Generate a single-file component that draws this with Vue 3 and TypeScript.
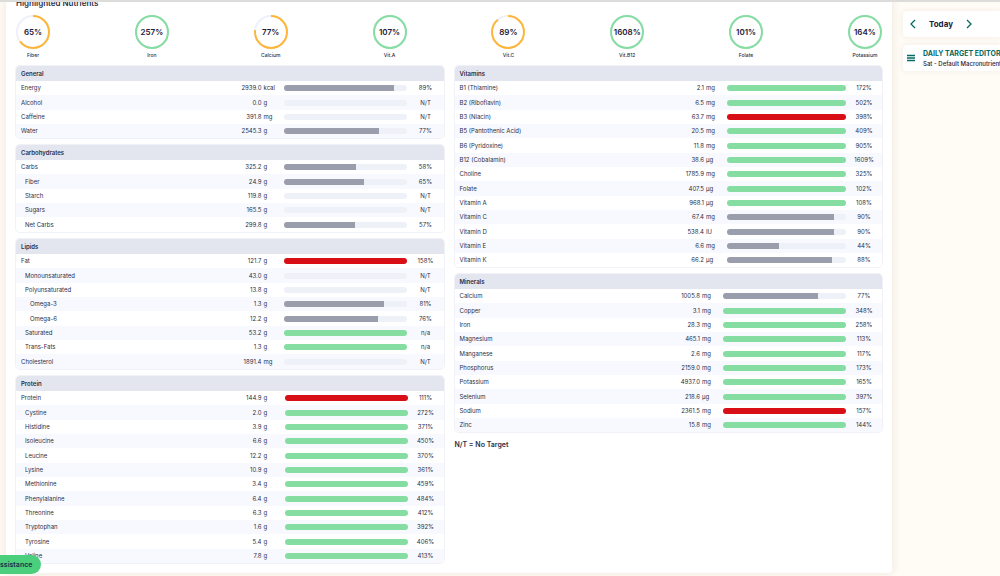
<script setup lang="ts">
type Tone = 'gray' | 'green' | 'red'

interface Nutrient {
  name: string
  amount: string
  unit: string
  target: string
  fill: number
  tone: Tone
  level: number
}

interface Group {
  title: string
  kind: string
  rows: Nutrient[]
}

function n(name: string, amount: string, unit: string, target: string, tone: Tone = 'green', level = 0): Nutrient {
  const value = parseInt(target, 10)
  const fill = target === 'N/T' ? 0 : Number.isNaN(value) ? 100 : Math.min(value, 100)
  return { name, amount, unit, target, fill, tone, level }
}

const rings = [
  { name: 'Fiber', value: 65 },
  { name: 'Iron', value: 257 },
  { name: 'Calcium', value: 77 },
  { name: 'Vit.A', value: 107 },
  { name: 'Vit.C', value: 89 },
  { name: 'Vit.B12', value: 1608 },
  { name: 'Folate', value: 101 },
  { name: 'Potassium', value: 164 },
]

const leftGroups: Group[] = [
  {
    title: 'General',
    kind: 'wide',
    rows: [
      n('Energy', '2939.0', 'kcal', '89%', 'gray'),
      n('Alcohol', '0.0', 'g', 'N/T'),
      n('Caffeine', '391.8', 'mg', 'N/T'),
      n('Water', '2545.3', 'g', '77%', 'gray'),
    ],
  },
  {
    title: 'Carbohydrates',
    kind: 'wide',
    rows: [
      n('Carbs', '325.2', 'g', '58%', 'gray'),
      n('Fiber', '24.9', 'g', '65%', 'gray', 1),
      n('Starch', '119.8', 'g', 'N/T', 'gray', 1),
      n('Sugars', '165.5', 'g', 'N/T', 'gray', 1),
      n('Net Carbs', '299.8', 'g', '57%', 'gray', 1),
    ],
  },
  {
    title: 'Lipids',
    kind: 'wide',
    rows: [
      n('Fat', '121.7', 'g', '158%', 'red'),
      n('Monounsaturated', '43.0', 'g', 'N/T', 'gray', 1),
      n('Polyunsaturated', '13.8', 'g', 'N/T', 'gray', 1),
      n('Omega-3', '1.3', 'g', '81%', 'gray', 2),
      n('Omega-6', '12.2', 'g', '76%', 'gray', 2),
      n('Saturated', '53.2', 'g', 'n/a', 'green', 1),
      n('Trans-Fats', '1.3', 'g', 'n/a', 'green', 1),
      n('Cholesterol', '1891.4', 'mg', 'N/T'),
    ],
  },
  {
    title: 'Protein',
    kind: 'wide',
    rows: [
      n('Protein', '144.9', 'g', '111%', 'red'),
      n('Cystine', '2.0', 'g', '272%', 'green', 1),
      n('Histidine', '3.9', 'g', '371%', 'green', 1),
      n('Isoleucine', '6.6', 'g', '450%', 'green', 1),
      n('Leucine', '12.2', 'g', '370%', 'green', 1),
      n('Lysine', '10.9', 'g', '361%', 'green', 1),
      n('Methionine', '3.4', 'g', '459%', 'green', 1),
      n('Phenylalanine', '6.4', 'g', '484%', 'green', 1),
      n('Threonine', '6.3', 'g', '412%', 'green', 1),
      n('Tryptophan', '1.6', 'g', '392%', 'green', 1),
      n('Tyrosine', '5.4', 'g', '406%', 'green', 1),
      n('Valine', '7.8', 'g', '413%', 'green', 1),
    ],
  },
]

const rightGroups: Group[] = [
  {
    title: 'Vitamins',
    kind: 'narrow',
    rows: [
      n('B1 (Thiamine)', '2.1', 'mg', '172%'),
      n('B2 (Riboflavin)', '6.5', 'mg', '502%'),
      n('B3 (Niacin)', '63.7', 'mg', '398%', 'red'),
      n('B5 (Pantothenic Acid)', '20.5', 'mg', '409%'),
      n('B6 (Pyridoxine)', '11.8', 'mg', '905%'),
      n('B12 (Cobalamin)', '38.6', 'µg', '1609%'),
      n('Choline', '1785.9', 'mg', '325%'),
      n('Folate', '407.5', 'µg', '102%'),
      n('Vitamin A', '968.1', 'µg', '108%'),
      n('Vitamin C', '67.4', 'mg', '90%', 'gray'),
      n('Vitamin D', '538.4', 'IU', '90%', 'gray'),
      n('Vitamin E', '6.6', 'mg', '44%', 'gray'),
      n('Vitamin K', '66.2', 'µg', '88%', 'gray'),
    ],
  },
  {
    title: 'Minerals',
    kind: 'wide',
    rows: [
      n('Calcium', '1005.8', 'mg', '77%', 'gray'),
      n('Copper', '3.1', 'mg', '348%'),
      n('Iron', '28.3', 'mg', '258%'),
      n('Magnesium', '465.1', 'mg', '113%'),
      n('Manganese', '2.6', 'mg', '117%'),
      n('Phosphorus', '2159.0', 'mg', '173%'),
      n('Potassium', '4937.0', 'mg', '165%'),
      n('Selenium', '218.6', 'µg', '397%'),
      n('Sodium', '2361.5', 'mg', '157%', 'red'),
      n('Zinc', '15.8', 'mg', '144%'),
    ],
  },
]

const columns = [leftGroups, rightGroups]
</script>

<template>
  <div class="page">
    <div class="topline"></div>
    <main class="panel">
      <h2 class="title">Highlighted Nutrients</h2>
      <div class="rings">
        <div v-for="ring in rings" :key="ring.name" class="ring">
          <div class="dial">
            <svg viewBox="0 0 34 34" width="34" height="34" aria-hidden="true">
              <circle class="track" cx="17" cy="17" r="16" />
              <circle
                :class="ring.value >= 100 ? 'full' : 'part'"
                cx="17"
                cy="17"
                r="16"
                pathLength="100"
                :stroke-dasharray="`${Math.min(ring.value, 100)} ${ring.value >= 100 ? 0 : 100}`"
                transform="rotate(-90 17 17)"
              />
            </svg>
            <strong>{{ ring.value }}%</strong>
          </div>
          <span class="ring-name">{{ ring.name }}</span>
        </div>
      </div>

      <div class="columns">
        <div v-for="(groups, c) in columns" :key="c" class="column">
          <table v-for="group in groups" :key="group.title" :class="['group', group.kind]">
            <colgroup>
              <col />
              <col class="c-amount" />
              <col class="c-unit" />
              <col class="c-bar" />
              <col class="c-target" />
            </colgroup>
            <thead>
              <tr>
                <th colspan="5" scope="colgroup">{{ group.title }}</th>
              </tr>
            </thead>
            <tbody>
              <tr v-for="row in group.rows" :key="row.name">
                <td :class="['name', `level-${row.level}`]">{{ row.name }}</td>
                <td class="amount">{{ row.amount }}</td>
                <td class="unit">{{ row.unit }}</td>
                <td>
                  <div class="bar">
                    <div :class="['fill', row.tone]" :style="{ width: row.fill + '%' }"></div>
                  </div>
                </td>
                <td class="target">{{ row.target }}</td>
              </tr>
            </tbody>
          </table>
          <p v-if="c === 1" class="note">N/T = No Target</p>
        </div>
      </div>
    </main>

    <aside class="side">
      <div class="side-card day">
        <button type="button" aria-label="Previous day">
          <svg viewBox="0 0 6 10" width="6" height="10"><path d="M5 1 1 5l4 4" /></svg>
        </button>
        <strong>Today</strong>
        <button type="button" aria-label="Next day">
          <svg viewBox="0 0 6 10" width="6" height="10"><path d="m1 1 4 4-4 4" /></svg>
        </button>
      </div>
      <div class="side-card editor">
        <button type="button" aria-label="Menu">
          <svg viewBox="0 0 8 8" width="8" height="8"><path d="M0 1.5h8M0 4h8M0 6.5h8" /></svg>
        </button>
        <div>
          <div class="editor-title">DAILY TARGET EDITOR</div>
          <div class="editor-text">Sat - Default Macronutrient</div>
        </div>
      </div>
    </aside>

    <button type="button" class="assist">ssistance</button>
  </div>
</template>

<style>
html,
body {
  background: #fffbf5;
}
</style>

<style scoped>
.page {
  display: flex;
  align-items: flex-start;
  gap: 11px;
  height: 100vh;
  padding-left: 6px;
  box-sizing: border-box;
  overflow: hidden;
  font-family: Inter, "Open Sans", sans-serif;
  font-size: 6px;
  line-height: 8px;
  color: #2b2e46;
}

.topline {
  position: absolute;
  top: 0;
  left: 0;
  right: 0;
  height: 2px;
  background: #dcdcdb;
}

.panel {
  flex: 1;
  min-width: 0;
  padding: 0 10px 10px;
  background: #fff;
  border-radius: 0 0 4px 4px;
  box-shadow: 0 0 10px rgba(90, 70, 40, 0.12);
}

.title {
  margin: -2px 0 7px;
  font-size: 8px;
  line-height: 10px;
  font-weight: 600;
}

.rings {
  display: flex;
  justify-content: space-between;
}

.ring {
  display: flex;
  flex-direction: column;
  align-items: center;
  width: 34px;
}

.dial {
  display: grid;
  place-items: center;
  color: #1d2038;
  font-size: 8px;
}

.dial > * {
  grid-area: 1 / 1;
}

.dial strong {
  font-weight: 600;
}

.dial circle {
  fill: none;
  stroke-width: 2;
}

.dial .track {
  stroke: #eef0fa;
}

.dial .full {
  stroke: #85dda2;
}

.dial .part {
  stroke: #ffb638;
}

.ring-name {
  margin-top: 2px;
  font-size: 5px;
  font-weight: 500;
  white-space: nowrap;
}

.columns {
  display: grid;
  grid-template-columns: 1fr 1fr;
  gap: 11px;
  margin-top: 7px;
}

.column {
  display: flex;
  flex-direction: column;
  gap: 7px;
  min-width: 0;
}

.group {
  width: 100%;
  table-layout: fixed;
  border-collapse: collapse;
  border-radius: 4px;
  overflow: hidden;
  box-shadow: 0 0 0 1px #f1f2f8;
}

.c-amount {
  width: 60px;
}

.c-unit {
  width: 23px;
}

.c-bar {
  width: 123px;
}

.narrow .c-bar {
  width: 119px;
}

.c-target {
  width: 36px;
}

.group th {
  height: 15px;
  padding: 0 5px;
  background: #e3e6ef;
  text-align: left;
  font-weight: 600;
}

.group td {
  height: 14px;
  padding: 0;
}

.group tbody tr:nth-child(3n + 2) td {
  height: 15px;
}

.group tbody tr:nth-child(even) {
  background: #f8f9fe;
}

.group .name {
  padding-left: 5px;
  white-space: nowrap;
}

.group .level-1 {
  padding-left: 9px;
}

.group .level-2 {
  padding-left: 14px;
}

.group .amount {
  text-align: right;
}

.group .unit {
  padding-left: 2px;
}

.group .target {
  text-align: center;
}

.bar {
  height: 6px;
  border-radius: 3px;
  overflow: hidden;
  background: #eff1f8;
}

.fill {
  height: 100%;
}

.gray {
  background: #9a9dac;
}

.green {
  background: #85dda2;
}

.red {
  background: #d80f16;
}

.note {
  margin: 2px 0 0;
  font-size: 7px;
  font-weight: 600;
}

.side {
  flex: 0 0 97px;
  min-width: 0;
  display: flex;
  flex-direction: column;
  gap: 8px;
  padding-top: 11px;
  color: #1d2038;
  white-space: nowrap;
}

.side-card {
  display: flex;
  align-items: center;
  height: 26px;
  background: #fff;
  border-radius: 4px 0 0 4px;
  box-shadow: 0 0 6px rgba(90, 70, 40, 0.08);
}

.side-card button {
  display: flex;
  padding: 0;
  border: 0;
  background: none;
}

.side-card path {
  fill: none;
  stroke: #09695f;
  stroke-width: 1.3;
}

.day {
  gap: 13px;
  padding-left: 7px;
  font-size: 8px;
}

.editor {
  gap: 8px;
  padding-left: 4px;
}

.editor-title {
  color: #09695f;
  font-size: 7px;
  line-height: 10px;
  font-weight: 700;
}

.editor-text {
  font-weight: 500;
  line-height: 9px;
}

.assist {
  position: fixed;
  left: 0;
  bottom: 2px;
  height: 19px;
  padding: 0 9px 0 0;
  border: 0;
  border-radius: 0 10px 10px 0;
  background: #4bcf7c;
  color: #17344a;
  font-family: inherit;
  font-size: 7px;
  line-height: 19px;
  font-weight: 600;
}
</style>
